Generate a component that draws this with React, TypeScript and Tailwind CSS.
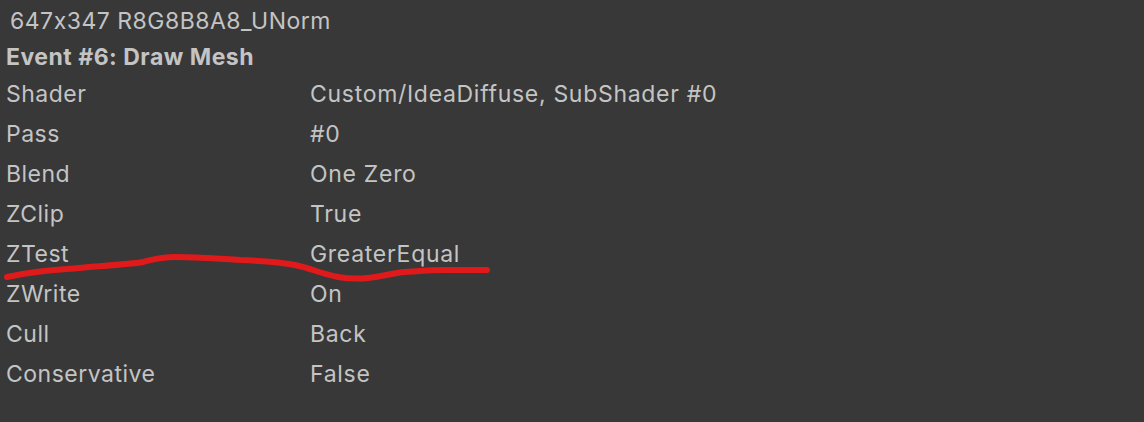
const rows: [string, string][] = [
  ['Shader', 'Custom/IdeaDiffuse, SubShader #0'],
  ['Pass', '#0'],
  ['Blend', 'One Zero'],
  ['ZClip', 'True'],
  ['ZTest', 'GreaterEqual'],
  ['ZWrite', 'On'],
  ['Cull', 'Back'],
  ['Conservative', 'False'],
];

export default function App() {
  return (
    <div
      className="relative w-[1144px] h-[422px] bg-[#383838] text-[#c4c4c4] text-[23px] tracking-[0.5px] [font-feature-settings:'calt'_0] overflow-hidden"
      style={{ fontFamily: 'Inter, "Noto Sans", sans-serif' }}
    >
      <div className="pt-[3px]">
        <div className="h-[36px] leading-[36px] pl-[10px]">647x347 R8G8B8A8_UNorm</div>
        <div className="h-[35px] leading-[37px] pl-[6px] font-bold">Event #6: Draw Mesh</div>
        {rows.map(([k, v]) => (
          <div key={k} className="flex h-[40px] leading-[40px] pl-[6px]">
            <div className="w-[304px] shrink-0">{k}</div>
            <div className="tracking-[0.7px]">{v}</div>
          </div>
        ))}
      </div>

      {/* red pen scribble */}
      <svg className="absolute inset-0 pointer-events-none" width="1144" height="422">
        <path
          d="M7 277 C30 272 50 270 67 269 C95 266 125 265 143 262 C155 259 160 257 175 257 C200 257 225 259 240 260 C265 261 280 262 295 265 C310 268 322 274 338 277 C350 279 358 279 368 278 C385 276 392 273 405 272 C420 271 430 270 445 270 L487 270"
          fill="none"
          stroke="#e01a1a"
          strokeWidth="6"
          strokeLinecap="round"
          strokeLinejoin="round"
        />
      </svg>
    </div>
  );
}
